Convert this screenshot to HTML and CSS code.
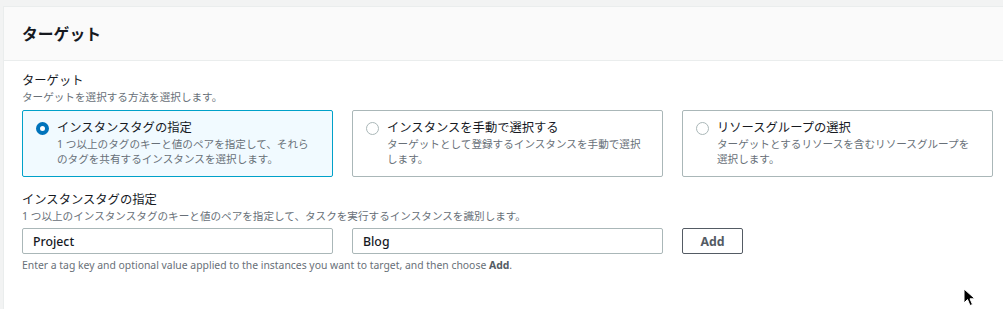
FILE: index.html
```html
<!doctype html>
<html lang="ja">
 <head>
  <meta charset="UTF-8">
  <meta name="viewport" content="width=device-width, initial-scale=1.0">
  <title>ターゲット</title>
  <link rel="stylesheet" href="styles.css">
 </head>
 <body>
  <div class="panel">
   <div class="panel-header">
    <h2>ターゲット</h2>
   </div>
   <div class="panel-body">
    <div class="field">
     <div class="field-label">ターゲット</div>
     <div class="field-desc">ターゲットを選択する方法を選択します。</div>
     <div class="tiles">
      <label class="tile selected">
       <span class="radio"></span>
       <span class="tile-text">
        <span class="tile-title">インスタンスタグの指定</span>
        <span class="tile-desc">1 つ以上のタグのキーと値のペアを指定して、それらのタグを共有するインスタンスを選択します。</span>
       </span>
      </label>
      <label class="tile">
       <span class="radio"></span>
       <span class="tile-text">
        <span class="tile-title">インスタンスを手動で選択する</span>
        <span class="tile-desc">ターゲットとして登録するインスタンスを手動で選択します。</span>
       </span>
      </label>
      <label class="tile">
       <span class="radio"></span>
       <span class="tile-text">
        <span class="tile-title">リソースグループの選択</span>
        <span class="tile-desc">ターゲットとするリソースを含むリソースグループを選択します。</span>
       </span>
      </label>
     </div>
    </div>
    <div class="field second">
     <div class="field-label">インスタンスタグの指定</div>
     <div class="field-desc">1 つ以上のインスタンスタグのキーと値のペアを指定して、タスクを実行するインスタンスを識別します。</div>
     <div class="tag-row">
      <input type="text" class="text-input" value="Project">
      <input type="text" class="text-input" value="Blog">
      <button class="add-btn">Add</button>
     </div>
     <div class="help">Enter a tag key and optional value applied to the instances you want to target, and then choose <b>Add</b>.</div>
    </div>
   </div>
  </div>
  <svg class="cursor" width="14" height="20" viewBox="0 0 14 20">
   <path d="M1 1 L1 15 L4.5 11.5 L7 17.5 L9.5 16.5 L7 10.8 L12 10.8 Z" fill="#000" stroke="#fff" stroke-width="1"/>
  </svg>
 </body>
</html>
```

FILE: styles.css
```css
* {
  margin: 0;
  padding: 0;
  box-sizing: border-box;
}

body {
  background: #f2f3f3;
  font-family: "Noto Sans", "Noto Sans CJK JP", sans-serif;
  color: #16191f;
  padding: 6px 0 0 3px;
  overflow: hidden;
  height: 309px;
  position: relative;
}

.panel {
  background: #fff;
  border: 1px solid #eaeded;
  border-right: none;
  border-bottom: none;
  height: 303px;
}

.panel-header {
  background: #fafafa;
  border-bottom: 1px solid #eaeded;
  height: 54px;
  display: flex;
  align-items: center;
  padding: 0 18px;
}

.panel-header h2 {
  font-size: 15.8px;
  font-weight: bold;
  line-height: 20px;
}

.panel-body {
  padding: 11px 0 0 18px;
}

.field-label {
  font-size: 12.3px;
  line-height: 18px;
}

.field-desc {
  font-size: 10.6px;
  line-height: 15px;
  color: #687078;
}

.tiles {
  display: grid;
  grid-template-columns: repeat(3, 311px);
  gap: 19px;
  margin-top: 5px;
}

.tile {
  display: flex;
  gap: 8px;
  height: 67px;
  border: 1px solid #aab7b8;
  border-radius: 2px;
  padding: 8px 14px 0 13px;
}

.tile.selected {
  background: #f1faff;
  border-color: #00a1c9;
}

.radio {
  flex: none;
  width: 13px;
  height: 13px;
  margin-top: 3px;
  border: 1px solid #aab7b8;
  border-radius: 50%;
  background: #fff;
}

.tile.selected .radio {
  border: 4px solid #0073bb;
}

.tile-text {
  display: flex;
  flex-direction: column;
}

.tile-title {
  font-size: 12.3px;
  line-height: 18px;
}

.tile-desc {
  font-size: 10.6px;
  line-height: 15px;
  color: #687078;
}

.second {
  margin-top: 14px;
}

.tag-row {
  display: flex;
  gap: 19px;
  margin-top: 4px;
}

.text-input {
  width: 311px;
  height: 26px;
  border: 1px solid #aab7b8;
  border-radius: 2px;
  padding: 0 10px;
  font-family: inherit;
  font-size: 12.3px;
  font-weight: 500;
  color: #16191f;
}

.add-btn {
  width: 61px;
  height: 26px;
  border: 1px solid #545b64;
  border-radius: 2px;
  background: #fff;
  color: #545b64;
  font-family: inherit;
  font-size: 12.3px;
  font-weight: bold;
}

.help {
  margin-top: 4px;
  font-size: 10.4px;
  line-height: 15px;
  color: #687078;
}

.help b {
  color: #545b64;
}

.cursor {
  position: absolute;
  left: 963px;
  top: 288px;
}
```
